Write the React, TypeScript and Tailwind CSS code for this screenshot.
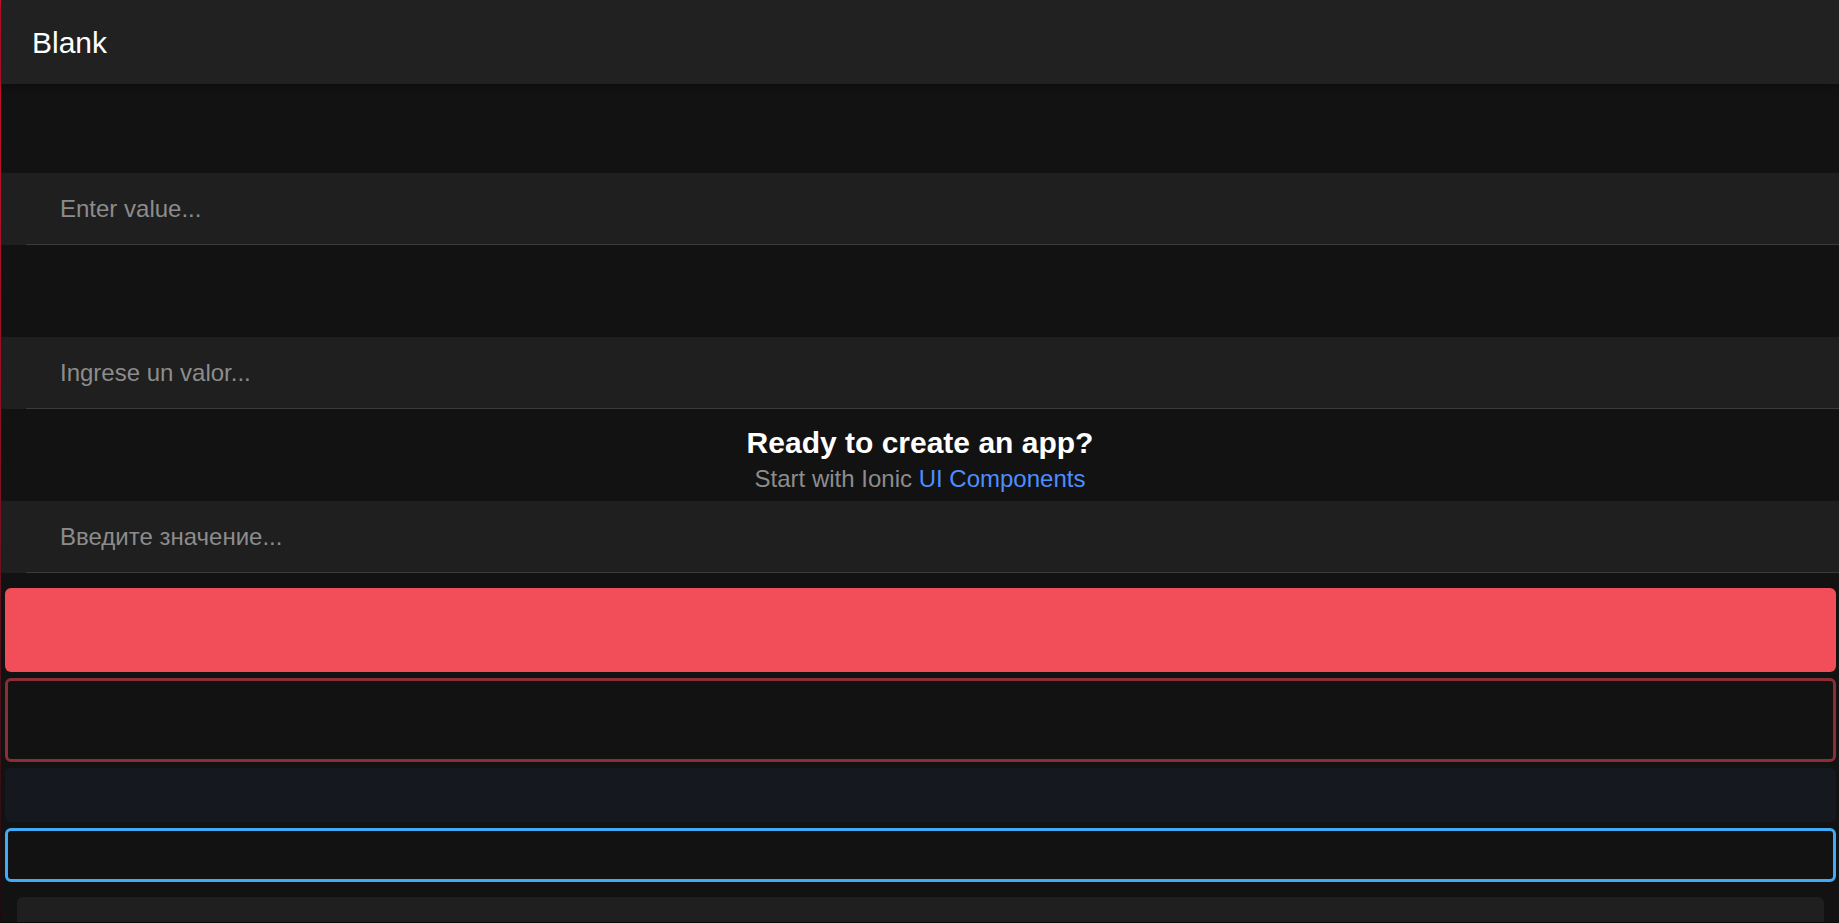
export default function App() {
  const inputs = ["Enter value...", "Ingrese un valor...", "Введите значение..."];

  const InputRow = ({ placeholder }: { placeholder: string }) => (
    <div className="bg-[#1f1f1f]">
      <div className="ml-[25px] h-[72px] border-b border-[#3b3b3b] flex items-center pl-[34px]">
        <input
          className="w-full bg-transparent outline-none text-[24px] text-white placeholder:text-[#8c8c8c]"
          placeholder={placeholder}
        />
      </div>
    </div>
  );

  return (
    <div className="h-[923px] overflow-hidden flex bg-[#121212] border-b border-[#0a0a0a] font-['Liberation_Sans',Arial,sans-serif]">
      <div className="w-px shrink-0 bg-gradient-to-b from-[#d3102e] via-[#8a0d22] to-[#1c0a0e]" />
      <div className="flex-1 min-w-0 flex flex-col">
        <header className="h-[84px] shrink-0 bg-[#212121] flex items-center px-[31px] text-[30px] text-white shadow-[0_2px_8px_rgba(0,0,0,0.35)] relative z-10">
          Blank
        </header>

        <div className="h-[89px] shrink-0" />
        <InputRow placeholder={inputs[0]} />
        <div className="h-[92px] shrink-0" />
        <InputRow placeholder={inputs[1]} />

        <div className="h-[92px] shrink-0 flex flex-col items-center pt-[17px]">
          <strong className="text-[30px] font-bold text-white leading-[1.15]">Ready to create an app?</strong>
          <p className="mt-[4px] text-[24px] text-[#8c8c8c] leading-[1.15]">
            Start with Ionic <a className="text-[#4d8dff]">UI Components</a>
          </p>
        </div>

        <InputRow placeholder={inputs[2]} />

        <div className="ml-[4px] mr-[3px] mt-[15px] flex flex-col gap-[6px]">
          <div className="h-[84px] rounded-[6px] bg-[#f24e5a]" />
          <div className="h-[84px] rounded-[6px] border-[3px] border-[#8b2e37]" />
          <div className="h-[54px] rounded-[6px] bg-[#15181e]" />
          <div className="h-[54px] rounded-[6px] border-[3px] border-[#40abf6]" />
        </div>

        <div className="ml-[16px] mr-[15px] mt-[15px] h-[60px] shrink-0 rounded-[6px] bg-[#1f1f1f]" />
      </div>
    </div>
  );
}
